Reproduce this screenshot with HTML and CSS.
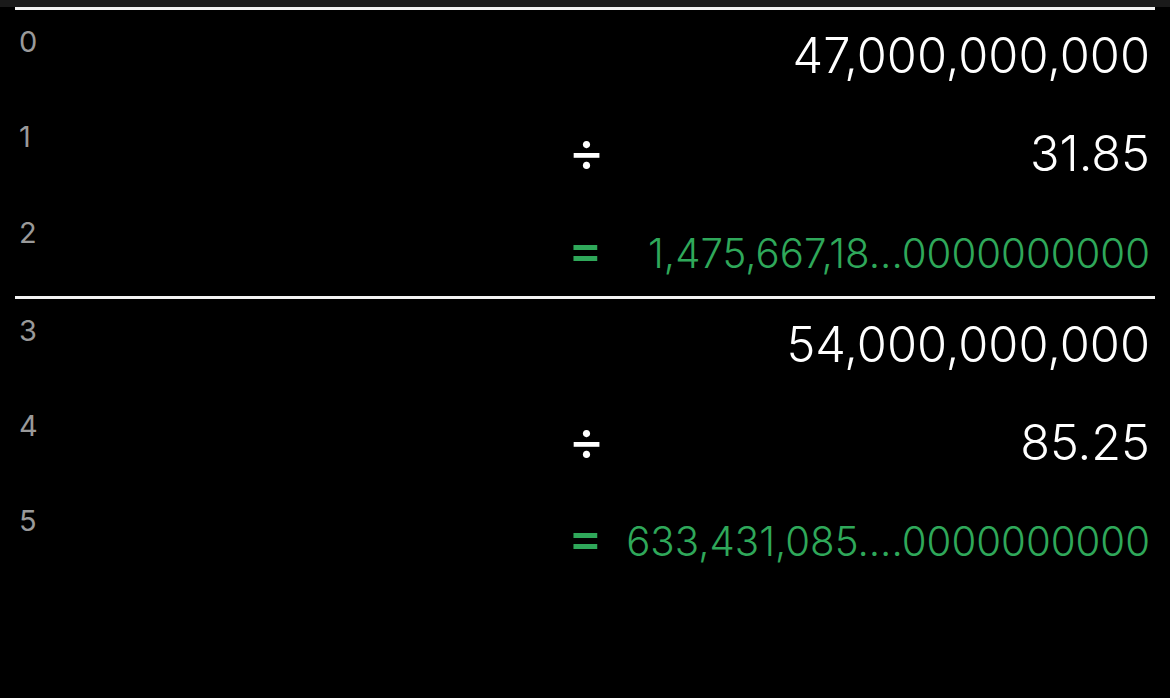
FILE: index.html
```html
<!DOCTYPE html>
<html>
<head>
<meta charset="utf-8">
<link rel="stylesheet" href="styles.css">
</head>
<body>
<div class="topbar"></div>
<section class="group">
  <div class="row">
    <span class="idx">0</span>
    <div class="entry"><span class="op"></span><span class="val">47,000,000,000</span></div>
  </div>
  <div class="row">
    <span class="idx">1</span>
    <div class="entry"><span class="op">÷</span><span class="val">31.85</span></div>
  </div>
  <div class="row">
    <span class="idx">2</span>
    <div class="entry result"><span class="op">=</span><span class="val">1,475,667,18...0000000000</span></div>
  </div>
</section>
<section class="group">
  <div class="row">
    <span class="idx">3</span>
    <div class="entry"><span class="op"></span><span class="val">54,000,000,000</span></div>
  </div>
  <div class="row">
    <span class="idx">4</span>
    <div class="entry"><span class="op">÷</span><span class="val">85.25</span></div>
  </div>
  <div class="row">
    <span class="idx">5</span>
    <div class="entry result"><span class="op">=</span><span class="val">633,431,085....0000000000</span></div>
  </div>
</section>
</body>
</html>
```
FILE: styles.css
```css
html, body {
  margin: 0;
  padding: 0;
  background: #000;
  height: 100%;
}
body {
  font-family: Inter, "Noto Sans", sans-serif;
  color: #fff;
  overflow: hidden;
}
.topbar {
  height: 7px;
  background: #1a1a1a;
}
.group {
  margin: 0 15px;
  border-top: 3px solid #f2f2f2;
}
.row {
  height: 95.3px;
  display: grid;
  grid-template-columns: 549px 1fr;
  align-items: start;
  padding-left: 4px;
  padding-right: 5px;
}
.idx {
  font-size: 29px;
  line-height: 29px;
  color: #9a9a9a;
  padding-top: 17px;
}
.entry {
  display: flex;
  align-items: baseline;
  padding-top: 22px;
  font-size: 48.7px;
  line-height: 48px;
  font-weight: 300;
}
.op {
  width: 50px;
  font-size: 56px;
  font-weight: 400;
}
.val {
  flex: 1;
  text-align: right;
  white-space: nowrap;
}
.result {
  color: #2fa85a;
  font-size: 40.2px;
  line-height: 40px;
  padding-top: 29px;
}
.result .op {
  font-size: 52px;
  font-weight: 500;
}
```
